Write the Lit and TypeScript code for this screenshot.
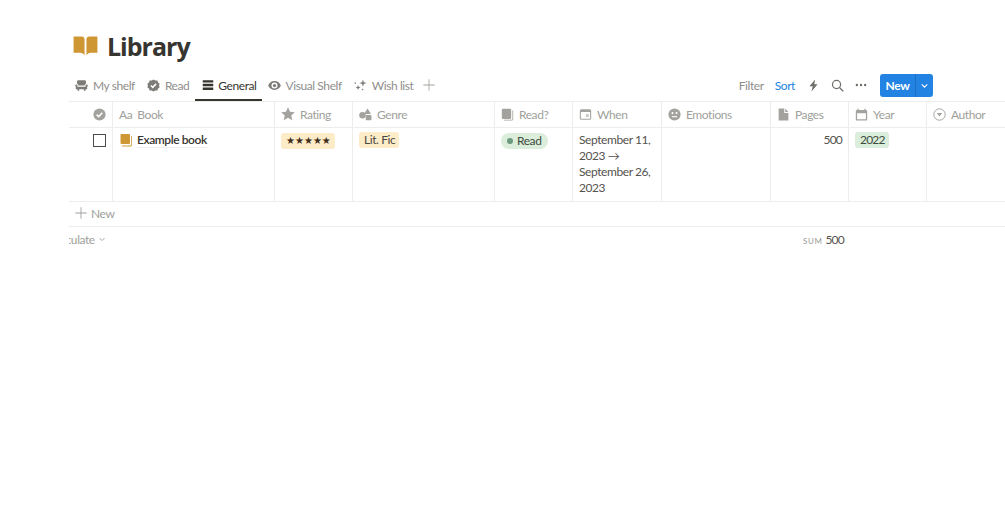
import { LitElement, html, css, svg } from "lit";
import { customElement } from "lit/decorators.js";

const ic = (body: unknown, size = 14, vb = 16) =>
  html`<svg class="ic" width=${size} height=${size} viewBox="0 0 ${vb} ${vb}">${body}</svg>`;

const icons: Record<string, unknown> = {
  sofa: svg`<path d="M4 1.500h8a1.500 1.500 0 0 1 1.500 1.500v2.700a2 2 0 0 0-1.600 1.900V8H4.100v-.4a2 2 0 0 0-1.600-1.900V3A1.500 1.500 0 0 1 4 1.500zM1.200 6.800a1.400 1.400 0 0 1 1.800 1.300V9.500h10V8.100a1.400 1.400 0 1 1 2 1.200v3.200H1V9.300a1.400 1.400 0 0 1 .2-2.500zM3 12.500h2.200V14.500H3zM10.800 12.500H13V14.500h-2.200z"/>`,
  badge: svg`<path d="M8 .5l2.200 1.400 2.600-.1.800 2.400 2 1.600-.8 2.200.8 2.200-2 1.600-.8 2.400-2.600-.1L8 15.500l-2.200-1.400-2.600.1-.8-2.400-2-1.600.8-2.200-.8-2.200 2-1.600.8-2.400 2.600.1z"/><path d="M4.800 8l2.300 2.300 4.100-4.300" fill="none" stroke="#fff" stroke-width="1.800"/>`,
  list: svg`<path d="M1 1.500h14v3.200H1zM1 6.400h14v3.200H1zM1 11.300h14v3.200H1z"/>`,
  eye: svg`<path fill-rule="evenodd" d="M8 2.500c3.800 0 6.700 2.600 7.800 5.500-1.100 2.900-4 5.500-7.800 5.500S1.300 10.900.2 8C1.300 5.100 4.200 2.500 8 2.500zm0 1.800a3.700 3.700 0 1 0 0 7.400 3.700 3.700 0 0 0 0-7.400z"/><circle cx="8" cy="8" r="2"/>`,
  sparkle: svg`<path d="M11 .5l1.100 3.400 3.400 1.100-3.400 1.100L11 9.500 9.900 6.100 6.500 5l3.400-1.100zM5 7.500l.9 2.100 2.100.9-2.100.9L5 13.500l-.9-2.100-2.100-.9 2.100-.9zM1.500 3.500l.5 1 1 .5-1 .5-.5 1-.5-1-1-.5 1-.5zM10.500 11.500l.5 1 1 .5-1 .5-.5 1-.5-1-1-.5 1-.5z"/>`,
  plus: svg`<path d="M7.500 1.500h1v6h6v1h-6v6h-1v-6h-6v-1h6z"/>`,
  bolt: svg`<path d="M10 .5L3 9h4L5.500 15.500l7.500-9H9z"/>`,
  search: svg`<circle cx="6.800" cy="6.800" r="5" fill="none" stroke="currentColor" stroke-width="1.500"/><path d="M10.300 10.300L15 15" fill="none" stroke="currentColor" stroke-width="1.700"/>`,
  dots: svg`<circle cx="2.500" cy="8" r="1.600"/><circle cx="8" cy="8" r="1.600"/><circle cx="13.500" cy="8" r="1.600"/>`,
  chev: svg`<path d="M4 6.500l4 4 4-4" fill="none" stroke="currentColor" stroke-width="1.500"/>`,
  check: svg`<circle cx="8" cy="8" r="7.500"/><path d="M4.500 8.200l2.500 2.400 4.500-4.800" fill="none" stroke="#fff" stroke-width="1.900"/>`,
  star: svg`<path d="M8 .4l2.300 5 5.500.6-4.100 3.700 1.200 5.500L8 12.400l-4.900 2.800 1.200-5.500L.2 6l5.500-.6z"/>`,
  shapes: svg`<path d="M10.500 .5l4.300 7h-8.600z"/><circle cx="4.300" cy="9" r="4"/><rect x="8.300" y="8.600" width="7" height="6.400" rx=".8"/>`,
  pages: svg`<path d="M2.500 .8H11a1.500 1.500 0 0 1 1.500 1.500v9.700a1.500 1.500 0 0 1-1.500 1.500H2.500A1.500 1.500 0 0 1 1 12V2.300A1.500 1.500 0 0 1 2.500.8z"/><path d="M14 3h1V13.500a2 2 0 0 1-2 2H3.500v-1H13a1 1 0 0 0 1-1z"/>`,
  cal: svg`<path fill-rule="evenodd" d="M3 1.500h10A2 2 0 0 1 15 3.500v9a2 2 0 0 1-2 2H3a2 2 0 0 1-2-2v-9a2 2 0 0 1 2-2zm-.7 3.500v7.500c0 .4.300.7.700.7h10c.4 0 .7-.3.700-.7V5z"/><rect x="8.500" y="7.500" width="3.500" height="3.500" opacity=".6"/>`,
  face: svg`<circle cx="8" cy="8" r="7.500"/><circle cx="5.500" cy="6.300" r="1.300" fill="#fff"/><circle cx="10.500" cy="6.300" r="1.300" fill="#fff"/><rect x="4.800" y="10" width="6.400" height="1.400" fill="#fff"/>`,
  doc: svg`<path d="M2 .5h6.900V6h5.100v9.500H2zM10.200.7l3.700 4.100h-3.700z"/>`,
  calSolid: svg`<path fill-rule="evenodd" d="M3 .8h1.500v1.700h7V.8H13v1.700h.5A1.500 1.500 0 0 1 15 4v10a1.500 1.500 0 0 1-1.500 1.500h-11A1.500 1.500 0 0 1 1 14V4a1.500 1.500 0 0 1 1.500-1.500H3zm-.4 5.700v7.400h10.800V6.500z"/>`,
  select: svg`<circle cx="8" cy="8" r="7" fill="none" stroke="currentColor" stroke-width="1.200"/><path d="M4.800 6.300h6.400L8 10.500z"/>`,
};

const tabs: [string, string, boolean][] = [
  ["sofa", "My shelf", false],
  ["badge", "Read", false],
  ["list", "General", true],
  ["eye", "Visual Shelf", false],
  ["sparkle", "Wish list", false],
];

const cols: [string, string][] = [
  ["shapes", "Genre"],
  ["pages", "Read?"],
  ["cal", "When"],
  ["face", "Emotions"],
  ["doc", "Pages"],
  ["calSolid", "Year"],
  ["select", "Author"],
];

@customElement("app-root")
export class AppRoot extends LitElement {
  static styles = css`
    :host {
      display: block;
      width: 1005px;
      height: 522px;
      overflow: hidden;
      background: #fff;
      font-family: Lato, "Open Sans", sans-serif;
      color: #37352f;
      font-size: 12px;
      letter-spacing: -0.42px;
    }
    .page {
      padding: 28px 0 0 69px;
    }
    .ic {
      fill: currentColor;
      flex: none;
      display: block;
    }
    .title {
      display: flex;
      align-items: center;
      gap: 9px;
      height: 38px;
      box-sizing: border-box;
      padding: 0 0 2px 4px;
    }
    .title h1 {
      margin: 0;
      font-size: 25px;
      line-height: 36px;
      font-family: "Open Sans", sans-serif;
      font-weight: 700;
      letter-spacing: -1px;
    }
    .bar {
      display: flex;
      justify-content: space-between;
      height: 35px;
    }
    .tabs {
      display: flex;
      align-items: stretch;
    }
    .tab {
      display: flex;
      align-items: center;
      gap: 5px;
      padding: 5px 6px 0;
      color: #8f8e8b;
      border-bottom: 2px solid transparent;
      box-sizing: border-box;
      height: 35px;
    }
    .tab .ic {
      color: #7d7c78;
    }
    .tab.on {
      color: #37352f;
      gap: 4px;
      padding: 5px 5px 0 7px;
      border-bottom-color: #37352f;
    }
    .tab.on .ic {
      color: #37352f;
      width: 12px;
      height: 12px;
    }
    .add {
      display: flex;
      align-items: center;
      color: #a5a4a1;
      padding: 3px 0 0 3px;
    }
    .tools {
      display: flex;
      align-items: center;
      padding-right: 72px;
      padding-top: 3px;
      color: #8f8e8b;
    }
    .tools .sort {
      color: #2383e2;
      margin-left: 11px;
    }
    .tools .bolt {
      margin-left: 12px;
      color: #6f6e69;
    }
    .tools .search {
      margin-left: 11px;
      color: #6f6e69;
    }
    .tools .dots {
      margin-left: 11px;
      color: #6f6e69;
    }
    .new {
      display: flex;
      margin-left: 13px;
      height: 23px;
      background: #2383e2;
      border-radius: 3px;
      color: #fff;
      font-weight: 700;
      align-items: stretch;
    }
    .new .lbl {
      width: 35px;
      text-align: center;
      line-height: 23px;
    }
    .new .arr {
      display: flex;
      align-items: center;
      justify-content: center;
      width: 17px;
      border-left: 1px solid #1b6fc2;
    }
    .grid {
      display: grid;
      grid-template-columns: 44px 162px 78px 142px 78px 89px 109px 78px 78px 1fr;
      border-top: 1px solid #ededec;
    }
    .h {
      height: 26px;
      box-sizing: border-box;
      display: flex;
      align-items: center;
      gap: 5px;
      padding: 0 6px 1px;
      color: #a09f9b;
      border-right: 1px solid #ededec;
      border-bottom: 1px solid #ededec;
      overflow: hidden;
      white-space: nowrap;
    }
    .h .ic {
      color: #a3a29e;
    }
    .h.first {
      justify-content: flex-end;
      padding-right: 6px;
    }
    .h.last,
    .c.last {
      border-right: none;
    }
    .c {
      padding: 4px 6px 0;
      height: 69px;
      border-right: 1px solid #ededec;
      border-bottom: 1px solid #ededec;
      line-height: 16px;
      color: #37352f;
    }
    .c.box {
      display: flex;
      justify-content: flex-end;
      padding-right: 6px;
    }
    .square {
      width: 11px;
      height: 11px;
      border: 1.500px solid #4d4b46;
      margin-top: 2px;
    }
    .name {
      display: flex;
      gap: 5px;
      font-weight: 600;
      align-items: center;
      height: 16px;
      padding-left: 1px;
      color: #37352f;
    }
    .name span {
      border-bottom: 1px solid #ededec;
      line-height: 15px;
    }
    .pill {
      display: inline-block;
      height: 16px;
      line-height: 16px;
      padding: 0 4px 0 5px;
      border-radius: 3px;
      color: #4a4843;
    }
    .y {
      background: #fdecc8;
    }
    .stars {
      letter-spacing: 0;
      font-size: 10px;
      font-family: "DejaVu Sans", sans-serif;
      color: #402c1b;
      padding: 0 4px 0 5px;
    }
    .g {
      background: #dbeddb;
      color: #3e4c3e;
    }
    .tight {
      letter-spacing: -0.8px;
    }
    .status {
      display: inline-flex;
      align-items: center;
      gap: 4px;
      border-radius: 9px;
      padding: 0 7px 0 6px;
    }
    .dot {
      width: 6px;
      height: 6px;
      border-radius: 50%;
      background: #6c9b7d;
    }
    .date {
      color: #55534e;
    }
    .num {
      text-align: right;
      color: #55534e;
      letter-spacing: -0.8px;
    }
    .newrow {
      display: flex;
      align-items: center;
      gap: 3px;
      height: 25px;
      box-sizing: border-box;
      padding: 0 0 2px 5px;
      color: #a09f9b;
      border-bottom: 1px solid #ededec;
    }
    .calc {
      display: flex;
      height: 26px;
      box-sizing: border-box;
      padding-bottom: 2px;
      align-items: center;
      color: #a09f9b;
      overflow: hidden;
    }
    .calc .clip {
      display: flex;
      align-items: center;
      gap: 2px;
      margin-left: -19px;
      width: 753px;
      flex: none;
    }
    .sum {
      display: flex;
      align-items: baseline;
      gap: 3px;
      flex: none;
      color: #55534e;
    }
    .sum small {
      font-size: 8px;
      letter-spacing: 0.6px;
      color: #9b9a97;
    }
    .sum span {
      letter-spacing: -0.8px;
    }
  `;

  render() {
    return html`<div class="page">
      <div class="title">
        <svg class="ic" width="25" height="20" viewBox="0 0 25 21" style="color:#cf9733">
          <path d="M0 .5h8.500c1.800 0 3 1.200 3 3V20.500C10.500 18.500 9 17.500 7 17.500H0zM25 .5h-8.500c-1.800 0-3 1.200-3 3V20.500c1-2 2.500-3 4.500-3h7z" />
        </svg>
        <h1>Library</h1>
      </div>
      <div class="bar">
        <div class="tabs">
          ${tabs.map(
            ([i, t, on]) =>
              html`<div class="tab ${on ? "on" : ""}">${ic(icons[i], 13)}<span>${t}</span></div>`,
          )}
          <div class="add">${ic(icons.plus, 14)}</div>
        </div>
        <div class="tools">
          <span>Filter</span><span class="sort">Sort</span>
          <span class="bolt">${ic(icons.bolt, 13)}</span>
          <span class="search">${ic(icons.search, 13)}</span>
          <span class="dots">${ic(icons.dots, 12)}</span>
          <div class="new">
            <span class="lbl">New</span>
            <span class="arr">${ic(icons.chev, 11)}</span>
          </div>
        </div>
      </div>
      <div class="grid">
        <div class="h first">${ic(icons.check, 13)}</div>
        <div class="h"><span>Aa</span><span>Book</span></div>
        <div class="h">${ic(icons.star, 14)}<span>Rating</span></div>
        ${cols.map(
          ([i, t], n) =>
            html`<div class="h ${n === cols.length - 1 ? "last" : ""}">${ic(icons[i], 13)}<span>${t}</span></div>`,
        )}
        <div class="c box"><div class="square"></div></div>
        <div class="c">
          <div class="name">
            <svg class="ic" width="12" height="13" viewBox="0 0 12 13" style="color:#cf9733">
              <path d="M1.500 0H9a1 1 0 0 1 1 1v8a1 1 0 0 1-1 1H1.500a1 1 0 0 1-1-1V1a1 1 0 0 1 1-1z" />
              <path d="M11 2h.8v9A1.500 1.500 0 0 1 10.300 12.500H2V11.500h8.300a.7.7 0 0 0 .7-.7z" />
            </svg>
            <span>Example book</span>
          </div>
        </div>
        <div class="c"><span class="pill y stars">★★★★★</span></div>
        <div class="c"><span class="pill y">Lit. Fic</span></div>
        <div class="c"><span class="pill g status"><i class="dot"></i>Read</span></div>
        <div class="c date">September 11, 2023 → September 26, 2023</div>
        <div class="c"></div>
        <div class="c num">500</div>
        <div class="c"><span class="pill g tight">2022</span></div>
        <div class="c last"></div>
      </div>
      <div class="newrow">${ic(icons.plus, 14)}<span>New</span></div>
      <div class="calc">
        <div class="clip"><span>Calculate</span>${ic(icons.chev, 10)}</div>
        <div class="sum"><small>SUM</small><span>500</span></div>
      </div>
    </div>`;
  }
}
